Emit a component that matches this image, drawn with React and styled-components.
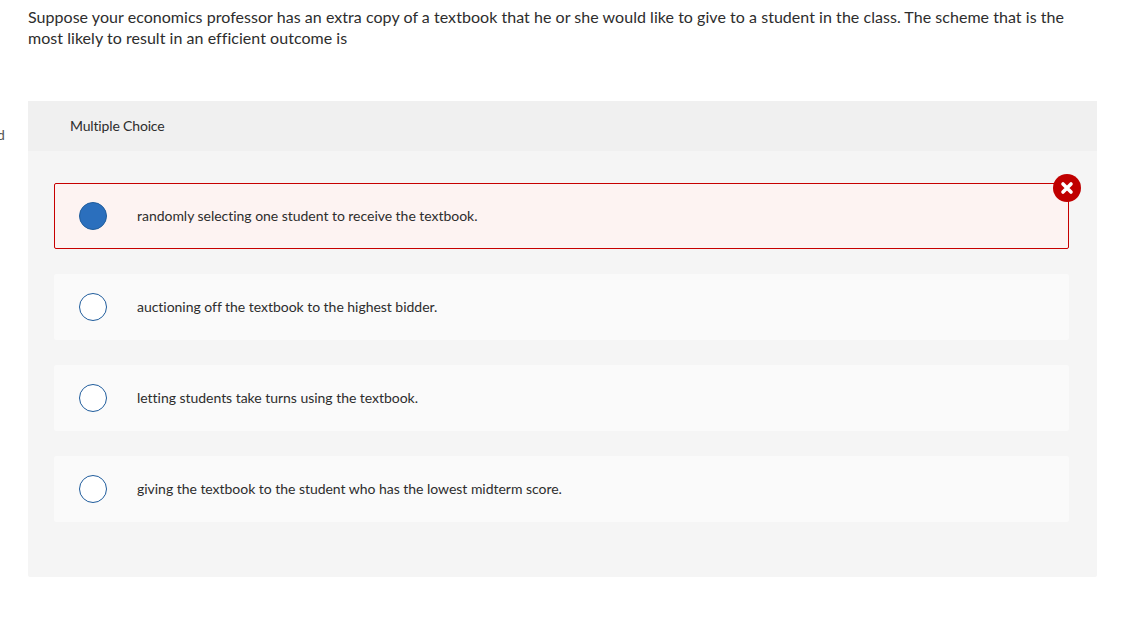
import React from 'react'
import styled, { createGlobalStyle } from 'styled-components'

const GlobalStyle = createGlobalStyle`
  html, body {
    margin: 0;
    padding: 0;
    background: #fff;
  }
  body {
    font-family: "Lato", "Liberation Sans", sans-serif;
    color: #2d2d2d;
    overflow: hidden;
  }
`

const Page = styled.div`
  position: relative;
  width: 1124px;
  height: 618px;
  padding: 6px 27px 0 28px;
  box-sizing: border-box;
`

const Clipped = styled.span`
  position: absolute;
  left: -3px;
  top: 126px;
  font-size: 14px;
  line-height: 18px;
  color: #555;
`

const Question = styled.p`
  margin: 0 0 53px;
  font-size: 16px;
  line-height: 21px;
  letter-spacing: 0.04px;
`

const Panel = styled.section`
  background: #f5f5f5;
  border-radius: 2px;
  padding-bottom: 55px;
`

const PanelHeader = styled.header`
  display: flex;
  align-items: center;
  height: 50px;
  padding: 0 0 2px 42px;
  box-sizing: border-box;
  background: #f0f0f0;
  font-size: 14px;
  letter-spacing: -0.16px;
`

const Options = styled.ul`
  display: flex;
  flex-direction: column;
  gap: 25px;
  margin: 0;
  padding: 32px 28px 0 26px;
  list-style: none;
`

const Option = styled.li`
  position: relative;
  display: flex;
  align-items: center;
  gap: 30px;
  height: 66px;
  box-sizing: border-box;
  border-radius: 2px;
  font-size: 14px;
  letter-spacing: -0.03px;
  background: ${p => (p.$wrong ? '#fdf3f2' : '#fafafa')};
  border: ${p => (p.$wrong ? '1px solid #c70000' : 'none')};
  padding-left: ${p => (p.$wrong ? '24px' : '25px')};
`

const Radio = styled.span`
  flex: none;
  width: 28px;
  height: 28px;
  box-sizing: border-box;
  border-radius: 50%;
  border: 1px solid #1f5c9c;
  background: ${p => (p.$checked ? '#2b6fbd' : '#fff')};
`

const AnswerText = styled.span`
  margin-bottom: 2px;
`

const WrongBadge = styled.span`
  position: absolute;
  top: -10px;
  right: -13px;
  display: flex;
  align-items: center;
  justify-content: center;
  width: 28px;
  height: 28px;
  border-radius: 50%;
  background: #c00000;
`

const answers = [
  'randomly selecting one student to receive the textbook.',
  'auctioning off the textbook to the highest bidder.',
  'letting students take turns using the textbook.',
  'giving the textbook to the student who has the lowest midterm score.'
]

const CrossIcon = () => (
  <svg width="14" height="14" viewBox="0 0 14 14" fill="none" stroke="#fff" strokeWidth="3.6" strokeLinecap="round">
    <path d="M3 3l8 8M11 3l-8 8" />
  </svg>
)

export default function App() {
  return (
    <Page>
      <GlobalStyle />
      <Clipped>d</Clipped>
      <Question>
        Suppose your economics professor has an extra copy of a textbook that he or she would like to give to a student in the class. The scheme that is the most likely to result in an efficient outcome is
      </Question>
      <Panel>
        <PanelHeader>Multiple Choice</PanelHeader>
        <Options>
          {answers.map((text, i) => (
            <Option key={text} $wrong={i === 0}>
              <Radio $checked={i === 0} />
              <AnswerText>{text}</AnswerText>
              {i === 0 && (
                <WrongBadge>
                  <CrossIcon />
                </WrongBadge>
              )}
            </Option>
          ))}
        </Options>
      </Panel>
    </Page>
  )
}
